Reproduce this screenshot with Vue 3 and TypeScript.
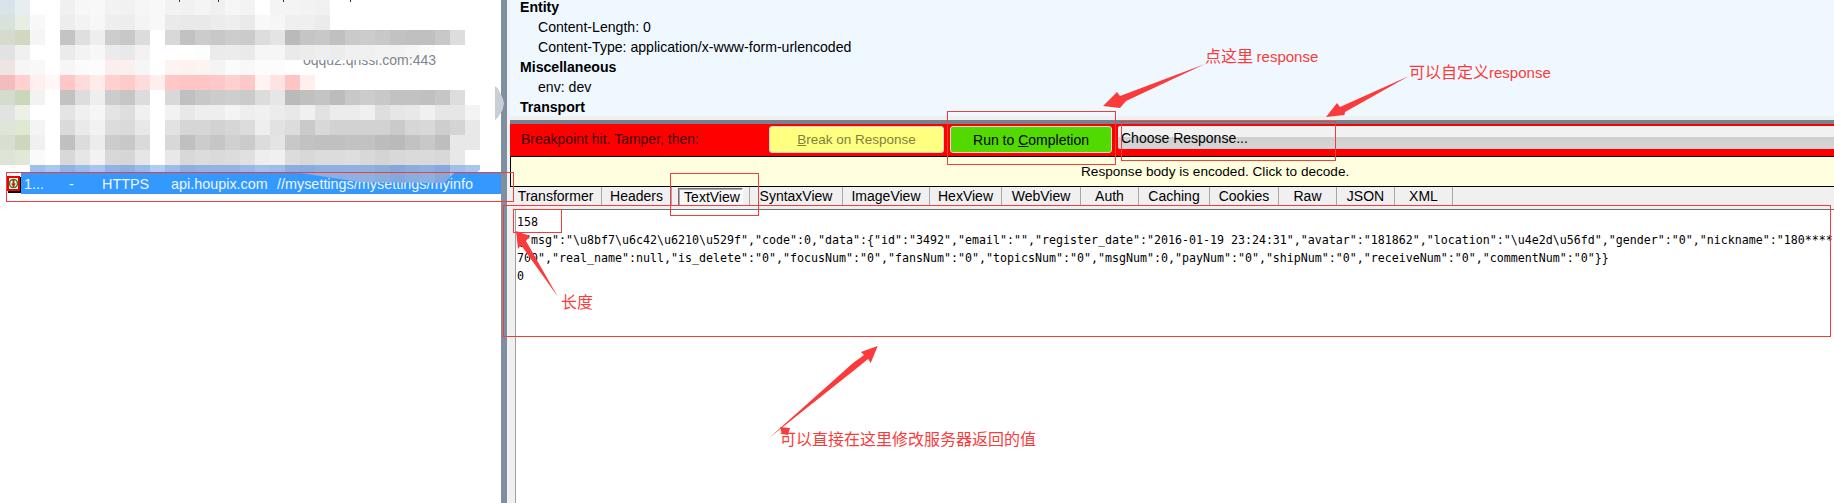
<script setup lang="ts">
const mosaicRows: string[] = [
  'd8e4ea e6eef2 ff ff f0 f7 f8 f2 f1 f6 f8 f2 f1 f4 f0 f6 f3 ff f4 f4 f2 f1 ff ff ff ff ff ff ff ff ff ff',
  'd7e2da e9eee4 f8 ff ed f3 f7 ee ed f4 f8 ea e9 e9 ec ee ea f8 f6 ef ef eb ff ff ff ff ff ff ff ff ff ff',
  'd5dccf d0d9c0 f5 ff c4 df ee cd c8 dc ff d8 c2 cc c8 cd cb dd e4 ba c5 c8 c0 ca cc c8 c2 c0 c0 c8 dd ff',
  'e2 f0 ff ff eb f3 f7 eb e9 f2 ff ff ff fd eb ec ea f6 f6 ea ec ee ec f0 f0 f2 f2 f6 fb ff ff ff',
  'eee4e4 f6 f8 ff f6 fb fc fbeeee fbf0f0 f6 ff fdf4f2 fdf2f0 fdf4f2 f4 fb f8 fc fc ff ff ff ff ff ff ff ff ff ff ff ff ff',
  'f4bcbc ffd0d0 fff0ee fff8f6 ffc6c6 ffdcdc ffecea ffd0d0 ffcaca ffdcdc ffeeee ffc8c8 ffc4c4 ffc4c4 ffc8c8 ffd0d0 ffc8c8 fff4f2 ffe2e2 ffc4c4 fff0ee ff ff ff ff ff ff ff ff ff ff ff',
  'd4dcd0 ccd6ba f2 ff c2 dd ee cc c6 dc ff d8 c0 c8 cc ce cb dc e6 ba c0 c4 bc c8 cc c8 c2 c2 c0 c6 dd ff',
  'e2 ecf0e6 ff ff e4 f0 f6 e4 de f0 ff f2 e8 ee ee f4 ee f0 ec e8 f0 e2 ec ec f0 de e6 e8 f0 e6 e6 f4',
  'dde6d8 dfe8d0 f4 ff da ea f2 dc da e8 ff e2 d6 d6 d2 d6 dc ee e2 dc ca d8 d2 d2 d2 d2 ca d6 d8 ce d4 e8',
  'd8dfd0 cdd7be f0 ff c0 dc ec cc c8 da ff d8 c0 cc c6 d0 cb dc e4 c8 c2 c0 c0 c2 c2 bc ba c2 c8 be e8 e8',
  'dfe4d8 e2e8d8 fa ff d8 e6 f2 d8 d6 e6 ff e8 d8 dc da dc e0 ee f0 dc d8 dc dc de d8 d4 d8 da da d8 e8 ff',
]

const toColor = (code: string): string =>
  code.length === 2 ? `#${code}${code}${code}` : `#${code}`

const mosaic: string[] = mosaicRows.flatMap((row) => row.split(' ').map(toColor))

const blueCells: string[] = [
  '9cc0ee', 'a8c8f2', '8fb4e4', '99bce8', 'a6c4ee', '8fb3e4', '8cb0e0', '98bcea', 'b0ccf4', '9cbce8',
  '8eb0e0', '92b2e2', '92b4e4', '92b4e4', '98b8e6', 'a2c0ec', 'a0bce8', '8aaee0', '88ace0', '8cb0e2',
  '8cb0e2', '8eb0e2', '90b0e0', '8aaedc', '84a8dc', '8aaedc', '8cb0e0', '86a8dc', 'a0c0ea', 'a8c6f0',
].map(toColor)

interface Tab {
  label: string
  selected?: boolean
}

const tabs: Tab[] = [
  { label: 'Transformer' },
  { label: 'Headers' },
  { label: 'TextView', selected: true },
  { label: 'SyntaxView' },
  { label: 'ImageView' },
  { label: 'HexView' },
  { label: 'WebView' },
  { label: 'Auth' },
  { label: 'Caching' },
  { label: 'Cookies' },
  { label: 'Raw' },
  { label: 'JSON' },
  { label: 'XML' },
]

const bodyLines: string[] = [
  '158',
  '{"msg":"\\u8bf7\\u6c42\\u6210\\u529f","code":0,"data":{"id":"3492","email":"","register_date":"2016-01-19 23:24:31","avatar":"181862","location":"\\u4e2d\\u56fd","gender":"0","nickname":"180****',
  '700","real_name":null,"is_delete":"0","focusNum":"0","fansNum":"0","topicsNum":"0","msgNum":0,"payNum":"0","shipNum":"0","receiveNum":"0","commentNum":"0"}}',
  '0',
]

const arrows: string[] = [
  '1103,106 1117,92 1120,96 1205,64 1126,101 1120,108',
  '1326,117 1337,103 1340,107 1409,76 1345,112 1344.5,115',
  '516,231 530,236 526,241 558,297 521,245 518,249',
  '877.7,346 861,352 864,355 853,363 769,438 857,368 868,359 870.7,363',
]

const frames: number[][] = [
  [6.5, 172.5, 507, 29],
  [670.5, 173.5, 88, 42],
  [947.5, 111.5, 168, 53],
  [1121.5, 121.5, 214, 39],
  [513.5, 209.5, 48, 23],
  [503.5, 205.5, 1327, 131],
]
</script>

<template>
  <div class="screen">
    <section class="sessions">
      <div class="mosaic">
        <i v-for="(color, index) in mosaic" :key="index" :style="{ background: color }"></i>
      </div>
      <div class="session-row">
        <svg class="session-icon" width="15" height="17" viewBox="0 0 15 17">
          <rect x="1" y="1" width="14" height="16" fill="#000" />
          <rect x="0" y="0" width="13" height="15" fill="#f00000" />
          <rect x="2" y="2" width="9" height="11" fill="#f4f4f4" />
          <circle cx="6.5" cy="7.5" r="4" fill="#fff" stroke="#2a8c1c" stroke-width="1.6" />
          <path d="M5.500 3.500h2v4h1.500l-2.500 4-2.500-4h1.500z" fill="#b03010" />
        </svg>
        <div class="session-cells">
          <span class="c-id">1...</span>
          <span class="c-result">-</span>
          <span class="c-proto">HTTPS</span>
          <span class="c-host">api.houpix.com</span>
          <span class="c-url">//mysettings/mysettings/myinfo</span>
        </div>
      </div>
      <div class="blue-smear">
        <i v-for="(color, index) in blueCells" :key="index" :style="{ background: color }"></i>
      </div>
      <span class="host-fragment">oqqu2.qnssl.com:443</span>
      <span class="smudge"></span>
    </section>

    <div class="splitter"></div>

    <section class="inspector">
      <div class="headers">
        <b>Entity</b>
        <p>Content-Length: 0</p>
        <p>Content-Type: application/x-www-form-urlencoded</p>
        <b>Miscellaneous</b>
        <p>env: dev</p>
        <b>Transport</b>
      </div>
      <div class="divider"></div>

      <div class="breakbar">
        <span class="break-label">Breakpoint hit. Tamper, then:</span>
        <button class="btn btn-break"><u>B</u>reak on Response</button>
        <button class="btn btn-run">Run to <u>C</u>ompletion</button>
        <div class="choose">Choose Response...</div>
      </div>

      <div class="notice">Response body is encoded. Click to decode.</div>

      <nav class="tabs">
        <span v-for="tab in tabs" :key="tab.label" class="tab" :class="{ selected: tab.selected }">
          <em>{{ tab.label }}</em>
        </span>
      </nav>

      <div class="editor-wrap">
        <div class="editor">
          <div v-for="(line, index) in bodyLines" :key="index" class="line">{{ line }}</div>
        </div>
      </div>
    </section>

    <svg class="marks" width="1834" height="503" viewBox="0 0 1834 503">
      <rect x="179" y="0" width="1" height="2" fill="#333" />
      <rect x="218" y="0" width="1" height="2" fill="#333" />
      <rect x="283" y="0" width="1" height="2" fill="#333" />
      <rect x="350" y="0" width="1" height="2" fill="#333" />
      <rect
        v-for="(f, index) in frames"
        :key="'f' + index"
        :x="f[0]"
        :y="f[1]"
        :width="f[2]"
        :height="f[3]"
        fill="none"
        stroke="#f43c3c"
        stroke-width="1"
      />
      <polygon v-for="(p, index) in arrows" :key="'a' + index" :points="p" fill="#fb3b3b" />
      <polygon points="780,427 790,428 788,435 782,434" fill="#fb3b3b" />
    </svg>

    <span class="note note-run">点这里 <span>response</span></span>
    <span class="note note-custom">可以自定义<span>response</span></span>
    <span class="note note-length">长度</span>
    <span class="note note-edit">可以直接在这里修改服务器返回的值</span>
  </div>
</template>

<style scoped>
.screen {
  position: relative;
  display: flex;
  width: 1834px;
  height: 503px;
  overflow: hidden;
  background: #fff;
  font-family: "Liberation Sans", Arial, sans-serif;
  font-size: 14px;
  color: #000;
}

.sessions {
  position: relative;
  flex: 0 0 501px;
  background: #fff;
}

.mosaic {
  display: grid;
  grid-template-columns: repeat(32, 15px);
  grid-auto-rows: 15px;
  height: 165px;
}

.mosaic i {
  display: block;
}

.session-row {
  display: flex;
  align-items: flex-start;
  margin-top: 8px;
  padding-left: 7px;
  gap: 0;
}

.session-icon {
  flex: none;
  margin-top: 3px;
  margin-right: -1px;
}

.session-cells {
  flex: 1;
  display: flex;
  height: 21px;
  line-height: 22px;
  background: #3399ff;
  color: #eef6ff;
  font-size: 14.4px;
  white-space: nowrap;
  overflow: hidden;
}

.session-cells span {
  flex: none;
}

.c-id {
  width: 45px;
  padding-left: 3px;
}

.c-result {
  width: 33px;
}

.c-proto {
  width: 69px;
}

.c-host {
  width: 106px;
}

.blue-smear {
  position: absolute;
  left: 30px;
  top: 165px;
  display: grid;
  grid-template-columns: repeat(30, 15px);
  grid-auto-rows: 18px;
  clip-path: polygon(0 0, 456px 0, 446px 8px, 424px 8px, 414px 18px, 330px 17px, 270px 8px, 0 8px);
}

.blue-smear i {
  display: block;
}

.host-fragment {
  position: absolute;
  right: 65px;
  top: 51px;
  line-height: 18px;
  color: #80858e;
  white-space: nowrap;
  clip-path: polygon(0 9px, 76px 9px, 90px 2px, 100% 2px, 100% 100%, 0 100%);
}

.smudge {
  position: absolute;
  left: 495px;
  top: 86px;
  width: 9px;
  height: 34px;
  background: #c8ced4;
  clip-path: polygon(0 0, 35% 8%, 85% 35%, 100% 50%, 85% 70%, 35% 92%, 0 100%);
}

.splitter {
  flex: 0 0 9px;
  background: linear-gradient(90deg, #7f8fa0 0 6px, #f0f2f4 6px);
}

.inspector {
  flex: 1;
  min-width: 0;
  display: flex;
  flex-direction: column;
}

.headers {
  height: 116px;
  overflow: hidden;
  box-sizing: border-box;
  margin: 0;
  padding: 0 0 0 10px;
  background: #eff7ff;
  font-size: 14.1px;
  line-height: 20px;
}

.headers b {
  display: block;
  position: relative;
  top: -3px;
}

.headers p {
  margin: 0 0 0 18px;
  position: relative;
  top: -3px;
}

.divider {
  height: 8px;
  flex: none;
  background: linear-gradient(#f0f0f0 0 4px, #76838f 4px);
}

.breakbar {
  flex: none;
  display: flex;
  align-items: flex-start;
  height: 32px;
  box-sizing: border-box;
  padding: 2px 0 0 11px;
  background: #ff0000;
}

.break-label {
  width: 248px;
  line-height: 27px;
  color: #400000;
  white-space: nowrap;
}

.btn {
  height: 27px;
  box-sizing: border-box;
  padding: 0;
  border: 1px solid #d8d8d8;
  border-radius: 3px;
  font: inherit;
  text-align: center;
}

.btn-break {
  width: 175px;
  margin-right: 6px;
  background: #ffff80;
  color: #7f7f40;
  font-size: 13.5px;
}

.btn-run {
  width: 162px;
  margin-right: 6px;
  background: #52d900;
  color: #000;
}

.choose {
  flex: 1;
  height: 23px;
  line-height: 24px;
  padding-left: 3px;
  margin-top: 0;
  border-radius: 2px 0 0 2px;
  background: linear-gradient(#f1f1f1 0 50%, #cfcfcf 50%, #d6d6d6 100%);
  white-space: nowrap;
}

.notice {
  flex: none;
  height: 31px;
  box-sizing: border-box;
  padding-left: 570px;
  line-height: 29px;
  border: solid #000;
  border-width: 1px 0 1px 1px;
  background: #ffffe0;
  font-size: 13.6px;
  white-space: nowrap;
}

.tabs {
  flex: none;
  display: grid;
  grid-template-columns: 92px 70px 78px 93px 87px 72px 79px 58px 71px 69px 58px 58px 58px;
  height: 22px;
  background: #f0f0f0;
}

.tab {
  position: relative;
  height: 18px;
  line-height: 18px;
  text-align: center;
  border-right: 1px solid #a8a8a8;
  white-space: nowrap;
  box-sizing: border-box;
}

.tab em {
  font-style: normal;
}

.tab.selected {
  padding: 1px 6px 0;
  line-height: 18px;
}

.tab.selected em {
  display: block;
  height: 16px;
  padding-left: 3px;
  line-height: 17px;
  border: 1px solid;
  border-color: #707070 #fff #fff #707070;
  box-shadow: inset 1px 1px 0 #aaa;
  background: #f8f8f8;
}

.editor-wrap {
  flex: 1;
  min-height: 0;
  padding-left: 5px;
  background: #f0f0f0;
}

.editor {
  height: 100%;
  box-sizing: border-box;
  padding: 3px 0 0 1px;
  background: #fff;
  border-top: 1px solid #707070;
  border-left: 1px solid #a0a0a0;
  font-family: "DejaVu Sans Mono", "Liberation Mono", monospace;
  font-size: 11.63px;
  overflow: hidden;
}

.line {
  height: 18px;
  line-height: 18px;
  white-space: pre;
}

.marks {
  position: absolute;
  left: 0;
  top: 0;
  pointer-events: none;
}

.note {
  position: absolute;
  font-family: "Noto Sans CJK SC", "Liberation Sans", sans-serif;
  font-size: 16px;
  line-height: 20px;
  color: #fb3b3b;
  white-space: nowrap;
}

.note span {
  font-family: "Liberation Sans", Arial, sans-serif;
  font-size: 15px;
}

.note-run {
  left: 1205px;
  top: 45px;
}

.note-custom {
  left: 1409px;
  top: 61px;
}

.note-length {
  left: 561px;
  top: 291px;
}

.note-edit {
  left: 780px;
  top: 428px;
}
</style>

<style>
html,
body {
  margin: 0;
  overflow: hidden;
  background: #fff;
}
</style>
